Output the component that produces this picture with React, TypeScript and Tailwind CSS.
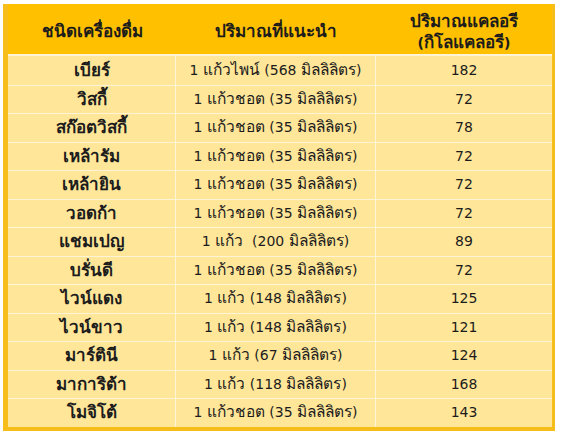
const rows: [string, string, string][] = [
  ['เบียร์', '1 แก้วไพน์ (568 มิลลิลิตร)', '182'],
  ['วิสกี้', '1 แก้วชอต (35 มิลลิลิตร)', '72'],
  ['สก๊อตวิสกี้', '1 แก้วชอต (35 มิลลิลิตร)', '78'],
  ['เหล้ารัม', '1 แก้วชอต (35 มิลลิลิตร)', '72'],
  ['เหล้ายิน', '1 แก้วชอต (35 มิลลิลิตร)', '72'],
  ['วอดก้า', '1 แก้วชอต (35 มิลลิลิตร)', '72'],
  ['แชมเปญ', '1 แก้ว  (200 มิลลิลิตร)', '89'],
  ['บรั่นดี', '1 แก้วชอต (35 มิลลิลิตร)', '72'],
  ['ไวน์แดง', '1 แก้ว (148 มิลลิลิตร)', '125'],
  ['ไวน์ขาว', '1 แก้ว (148 มิลลิลิตร)', '121'],
  ['มาร์ตินี', '1 แก้ว (67 มิลลิลิตร)', '124'],
  ['มาการิต้า', '1 แก้ว (118 มิลลิลิตร)', '168'],
  ['โมจิโต้', '1 แก้วชอต (35 มิลลิลิตร)', '143'],
];

// Thai glyphs come out small in the fallback font, so give Thai runs a bigger size
function Txt({ s, big }: { s: string; big?: boolean }) {
  const parts = s.split(/([\u0E00-\u0E7F]+)/).filter(Boolean);
  return (
    <>
      {parts.map((p, i) =>
        /[\u0E00-\u0E7F]/.test(p) ? (
          <span key={i} className={big ? 'text-[17px]' : 'text-[15.5px]'}>{p}</span>
        ) : (
          <span key={i}>{p}</span>
        )
      )}
    </>
  );
}

export default function App() {
  return (
    <div className="w-[561px] h-[436px] bg-white pt-[4px] pl-[3px] font-['DejaVu_Sans',sans-serif] text-[14px] text-[#1c1c1c]">
      <div className="w-[552px] border-l-[5px] border-r-[3px] border-b-[4px] border-[#f7be1b] bg-[#ffc000]">
        <div className="grid grid-cols-[168px_200px_176px] h-[50px] pt-[5px] items-center text-center font-bold">
          <div><Txt s="ชนิดเครื่องดื่ม" big /></div>
          <div><Txt s="ปริมาณที่แนะนำ" big /></div>
          <div className="leading-[20px]">
            <Txt s="ปริมาณแคลอรี" big />
            <br />
            <Txt s="(กิโลแคลอรี)" big />
          </div>
        </div>
        <div className="border-t-[2px] border-[#fff4d6] bg-[#ffe699]">
          {rows.map(([name, amount, kcal], i) => (
            <div
              key={name}
              className={`grid grid-cols-[168px_200px_176px] h-[28.5px] items-center text-center ${
                i > 0 ? 'border-t border-[#fff4d6]' : ''
              }`}
            >
              <div className="font-bold border-r border-[#fff4d6] h-full flex items-center justify-center">
                <Txt s={name} big />
              </div>
              <div className="border-r border-[#fff4d6] h-full flex items-center justify-center whitespace-pre">
                <Txt s={amount} />
              </div>
              <div>{kcal}</div>
            </div>
          ))}
        </div>
      </div>
    </div>
  );
}
